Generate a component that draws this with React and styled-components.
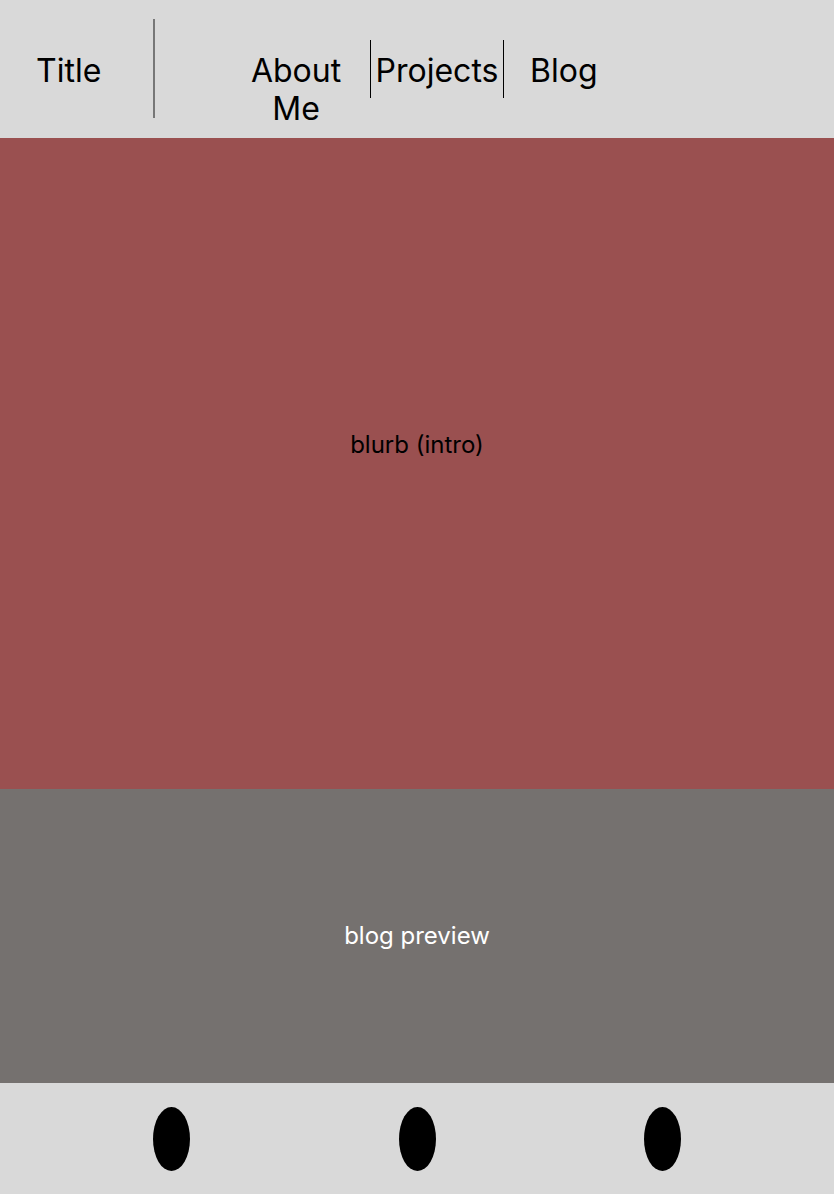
import styled, { createGlobalStyle } from 'styled-components';

const GlobalStyle = createGlobalStyle`
  * {
    box-sizing: border-box;
  }
  body {
    margin: 0;
    font-family: Inter, 'Noto Sans', sans-serif;
    color: #000000;
  }
`;

const App = () => {
  return (
    <>
      <GlobalStyle />
      <Page>
        <Header>
          <TitleText>Title</TitleText>
          <Divider $top={19} $height={99} $width={2} $color="#777777" />
          <NavItem $width={120} $left={81} $right={14}>
            About Me
          </NavItem>
          <Divider $top={40} $height={58} $color="#000000" />
          <NavItem $width={132}>Projects</NavItem>
          <Divider $top={40} $height={58} $color="#000000" />
          <NavItem $left={26}>Blog</NavItem>
        </Header>
        <Blurb>
          <SectionText>blurb (intro)</SectionText>
        </Blurb>
        <BlogPreview>
          <SectionText $light>blog preview</SectionText>
        </BlogPreview>
        <Footer>
          <Dot />
          <Dot />
          <Dot />
        </Footer>
      </Page>
    </>
  );
};

const Page = styled.div`
  display: flex;
  flex-direction: column;
  width: 834px;
  min-height: 1194px;
`;
const Header = styled.header`
  display: flex;
  align-items: flex-start;
  height: 138px;
  background: #d9d9d9;
`;
const TitleText = styled.div`
  width: 153px;
  margin-top: 52px;
  padding-left: 36px;
  font-size: 32px;
  line-height: 38px;
`;
const Divider = styled.div`
  width: ${(props) => props.$width || 1}px;
  flex-shrink: 0;
  margin-top: ${(props) => props.$top}px;
  height: ${(props) => props.$height}px;
  background: ${(props) => props.$color};
`;
const NavItem = styled.div`
  width: ${(props) => (props.$width ? `${props.$width}px` : 'auto')};
  margin-top: 52px;
  margin-left: ${(props) => props.$left || 0}px;
  margin-right: ${(props) => props.$right || 0}px;
  font-size: 32px;
  line-height: 38px;
  text-align: ${(props) => (props.$width ? 'center' : 'left')};
`;
const Blurb = styled.section`
  display: flex;
  align-items: center;
  justify-content: center;
  height: 651px;
  padding-bottom: 38px;
  background: #9a5050;
`;
const BlogPreview = styled.section`
  display: flex;
  align-items: center;
  justify-content: center;
  height: 294px;
  padding-bottom: 2px;
  background: #75716f;
`;
const SectionText = styled.p`
  margin: 0;
  font-size: 24px;
  line-height: 29px;
  color: ${(props) => (props.$light ? '#ffffff' : '#000000')};
`;
const Footer = styled.footer`
  display: flex;
  align-items: center;
  justify-content: space-between;
  height: 111px;
  padding: 0 153px;
  background: #d9d9d9;
`;
const Dot = styled.div`
  width: 37px;
  height: 64px;
  border-radius: 50%;
  background: #000000;
`;

export default App;
